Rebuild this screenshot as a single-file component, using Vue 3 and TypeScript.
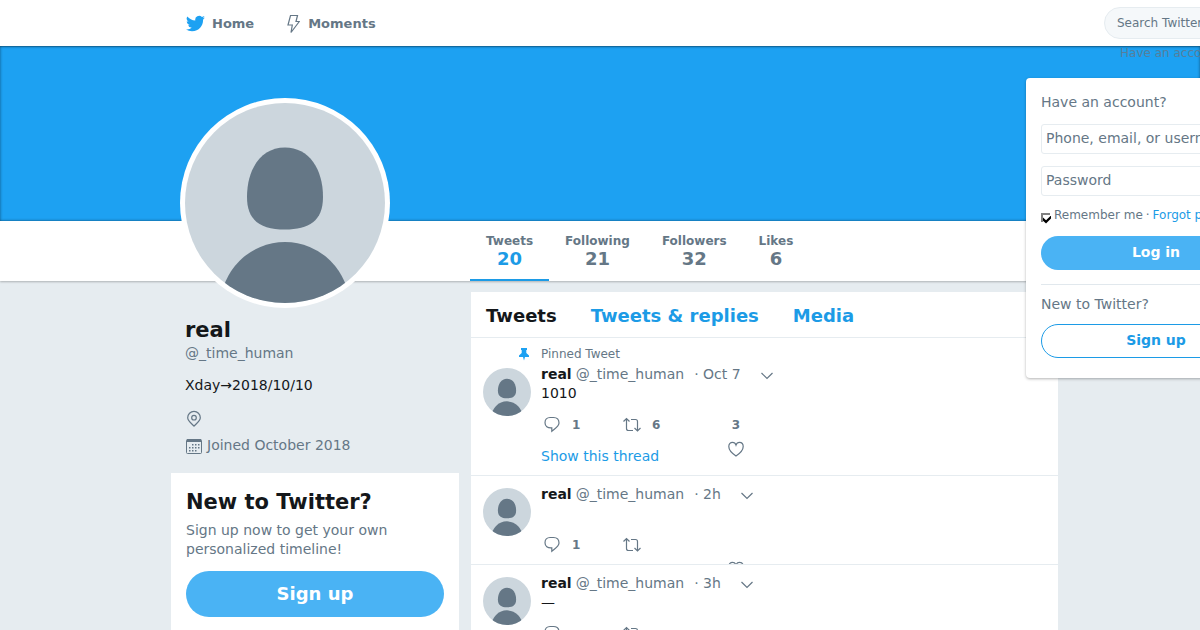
<script setup lang="ts">
import { ref } from 'vue'

interface Tweet {
  id: number
  pinned?: boolean
  time: string
  text: string
  replies?: number
  retweets?: number
  likes?: number
  thread?: boolean
}

const stats = [
  { label: 'Tweets', value: 20 },
  { label: 'Following', value: 21 },
  { label: 'Followers', value: 32 },
  { label: 'Likes', value: 6 },
]

const tweets: Tweet[] = [
  { id: 1, pinned: true, time: 'Oct 7', text: '1010', replies: 1, retweets: 6, likes: 3, thread: true },
  { id: 2, time: '2h', text: '', replies: 1 },
  { id: 3, time: '3h', text: '—' },
]

const search = ref('')
const user = ref('')
const password = ref('')
const remember = ref(true)
const dots = [
  [7, 7], [10, 7], [13, 7],
  [4, 10], [7, 10], [10, 10], [13, 10],
  [4, 13], [7, 13], [10, 13],
]
</script>

<template>
  <div class="page">
    <svg class="defs" aria-hidden="true">
      <symbol id="person" viewBox="0 0 200 200">
        <rect width="200" height="200" fill="#ccd6dd" />
        <path fill="#657786" d="M100 44.500C124 44.500 138 66 138 94C138 118 124 126.500 100 126.500C76 126.500 62 118 62 94C62 66 76 44.500 100 44.500Z" />
        <circle cx="100" cy="203.500" r="64.500" fill="#657786" />
      </symbol>
    </svg>

    <header class="topbar">
      <div class="container topbar-inner">
        <nav class="main-nav" aria-label="Main">
          <a href="#">
            <svg class="bird" viewBox="0 0 24 24"><path fill="#1da1f2" d="M23.950 4.570a10 10 0 0 1-2.820.780 4.960 4.960 0 0 0 2.160-2.730c-.950.560-2 .960-3.130 1.190a4.920 4.920 0 0 0-8.380 4.480C7.690 8.100 4.070 6.130 1.640 3.160a4.920 4.920 0 0 0 1.520 6.570 4.900 4.900 0 0 1-2.230-.610v.060c0 2.380 1.700 4.370 3.950 4.820a5 5 0 0 1-2.210.090 4.940 4.940 0 0 0 4.600 3.420A9.870 9.870 0 0 1 0 19.540a14 14 0 0 0 7.550 2.210c9.050 0 14-7.500 14-13.980 0-.210 0-.420-.020-.630a9.940 9.940 0 0 0 2.420-2.570z" /></svg>
            Home
          </a>
          <a href="#">
            <svg class="bolt" viewBox="0 0 14 20"><path d="M4.500 1.500H11.500L10 7.500H13.300L5 18.500L6.300 11H2Z" /></svg>
            Moments
          </a>
        </nav>
        <form class="search" role="search" @submit.prevent>
          <input v-model="search" type="search" placeholder="Search Twitter" aria-label="Search Twitter" />
        </form>
        <section class="account">
          <button class="account-toggle" type="button">Have an account?</button>
          <form class="login" @submit.prevent>
            <p class="login-title">Have an account?</p>
            <input v-model="user" class="field" type="text" placeholder="Phone, email, or username" aria-label="Phone, email, or username" />
            <input v-model="password" class="field" type="password" placeholder="Password" aria-label="Password" />
            <div class="remember">
              <label><input v-model="remember" type="checkbox" />Remember me</label>
              <span>·</span>
              <a href="#">Forgot password?</a>
            </div>
            <button class="pill filled" type="submit">Log in</button>
            <hr />
            <p class="login-new">New to Twitter?</p>
            <button class="pill outline" type="button">Sign up</button>
          </form>
        </section>
      </div>
    </header>

    <div class="banner"></div>

    <div class="stats-bar">
      <nav class="container stats" aria-label="Profile">
        <a v-for="(s, i) in stats" :key="s.label" href="#" :class="{ active: i === 0 }">
          <span class="stat-label">{{ s.label }}</span>
          <span class="stat-value">{{ s.value }}</span>
        </a>
      </nav>
    </div>

    <main class="container columns">
      <aside class="sidebar">
        <div class="photo"><svg role="img" aria-label="real"><use href="#person" /></svg></div>
        <section class="profile">
          <h1>real</h1>
          <a class="handle" href="#">@_time_human</a>
          <p class="bio">Xday→2018/10/10</p>
          <p class="fact">
            <svg class="line" viewBox="0 0 18 20"><path d="M9 17.200C6 14 2.700 11.800 2.700 8.700A6.300 6.300 0 0 1 15.300 8.700C15.300 11.800 12 14 9 17.200Z" /><circle cx="9" cy="8.700" r="2.300" /></svg>
          </p>
          <p class="fact joined">
            <svg viewBox="0 0 18 20">
              <rect x="1.500" y="4.500" width="15" height="14" rx="1" fill="none" stroke="#657786" />
              <path d="M2 4h14v3H2z" fill="#657786" />
              <rect v-for="d in dots" :key="d.join()" :x="d[0]" :y="d[1] + 2" width="1.500" height="1.500" fill="#657786" />
            </svg>
            Joined October 2018
          </p>
        </section>
        <section class="join">
          <h2>New to Twitter?</h2>
          <p>Sign up now to get your own personalized timeline!</p>
          <button class="pill large" type="button">Sign up</button>
        </section>
      </aside>

      <section class="feed">
        <nav class="tabs" aria-label="Timeline">
          <a class="current" href="#">Tweets</a>
          <a href="#">Tweets &amp; replies</a>
          <a href="#">Media</a>
        </nav>
        <article v-for="t in tweets" :key="t.id" class="tweet">
          <p v-if="t.pinned" class="pinned">
            <svg viewBox="0 0 12 14"><path fill="#1da1f2" d="M3 1H9V3H8.300V6L11 8.500V10H7L6 13.500L5 10H1V8.500L3.700 6V3H3Z" /></svg>
            Pinned Tweet
          </p>
          <div class="tweet-main">
            <svg class="thumb" aria-hidden="true"><use href="#person" /></svg>
            <div class="tweet-content">
              <div class="byline">
                <strong>real</strong>
                <a href="#">@_time_human</a>
                <span class="time">· {{ t.time }}</span>
                <button type="button" aria-label="More">
                  <svg class="line" viewBox="0 0 14 14"><path d="M1.500 4L7 9.500L12.500 4" /></svg>
                </button>
              </div>
              <p class="text">{{ t.text }}</p>
              <div class="actions">
                <button type="button" aria-label="Reply">
                  <svg class="line" viewBox="0 0 20 20"><path d="M8 2.500H11.500C15 2.500 17 4.800 17 8C17 11.500 13 13.500 9.800 16.200V12.900C5.500 13.200 3 11.200 3 7.700C3 4.700 5 2.500 8 2.500Z" /></svg>
                  {{ t.replies }}
                </button>
                <button type="button" aria-label="Retweet">
                  <svg class="line" viewBox="0 0 20 20"><path d="M1.500 6.500L4.500 3.500L7.500 6.500M4.500 3.500V13.500Q4.500 15.500 6.500 15.500H11M9 4.500H13.500Q15.500 4.500 15.500 6.500V16M12.500 13L15.500 16L18.500 13" /></svg>
                  {{ t.retweets }}
                </button>
                <button class="like" type="button" aria-label="Like">
                  <span>{{ t.likes }}</span>
                  <svg class="line" viewBox="0 0 20 20"><path d="M10 17C7 15 2.800 11.500 2.800 7.500C2.800 5 4.500 3.300 6.500 3.300C8.300 3.300 9.500 4.500 10 6C10.500 4.500 11.700 3.300 13.500 3.300C15.500 3.300 17.200 5 17.200 7.500C17.200 11.500 13 15 10 17Z" /></svg>
                </button>
              </div>
              <a v-if="t.thread" class="thread" href="#">Show this thread</a>
            </div>
          </div>
        </article>
      </section>
    </main>
  </div>
</template>

<style>
body {
  margin: 0;
}
</style>

<style scoped>
.page {
  height: 100vh;
  overflow: hidden;
  background: #e6ecf0;
  color: #14171a;
  font: 14px/20px "DejaVu Sans", sans-serif;
}
.defs {
  position: absolute;
  width: 0;
  height: 0;
}
h1, h2, p {
  margin: 0;
}
a {
  color: #1c9be6;
  text-decoration: none;
}
button, input {
  font: inherit;
  box-sizing: border-box;
}
button {
  border: 0;
  padding: 0;
  background: none;
  color: inherit;
  cursor: pointer;
}
.line {
  fill: none;
  stroke: #657786;
  stroke-width: 1.2;
}
.container {
  width: 858px;
  margin: 0 auto;
}

.topbar {
  position: relative;
  z-index: 3;
  background: #fff;
  box-shadow: 0 0 2px rgba(0, 0, 0, 0.6);
}
.topbar-inner {
  position: relative;
  display: grid;
  grid-template-columns: 933px 220px;
  align-items: center;
  height: 46px;
}
.main-nav {
  display: flex;
  gap: 32px;
  padding: 1px 0 0 15px;
}
.main-nav a {
  display: flex;
  align-items: center;
  color: #657786;
  font-size: 13px;
  font-weight: bold;
}
.bird {
  width: 19px;
  height: 19px;
  margin-right: 7px;
}
.bolt {
  width: 14px;
  height: 20px;
  margin-right: 8px;
  fill: none;
  stroke: #657786;
  stroke-width: 1.2;
}
.search input {
  display: block;
  width: 100%;
  height: 32px;
  padding: 0 12px;
  border: 1px solid #e6ecf0;
  border-radius: 16px;
  background: #f5f8fa;
  font-size: 12px;
}
input::placeholder {
  color: #657786;
  opacity: 1;
}
.account {
  position: absolute;
  top: 44px;
  left: 855px;
  width: 260px;
}
.account-toggle {
  display: block;
  margin-left: 94px;
  color: #657786;
  font-size: 12px;
  line-height: 18px;
  white-space: nowrap;
  opacity: 0.8;
}
.login {
  display: flex;
  flex-direction: column;
  margin-top: 16px;
  padding: 15px 15px 20px;
  border-radius: 4px;
  background: #fff;
  box-shadow: 0 1px 3px rgba(0, 0, 0, 0.3);
  color: #657786;
}
.login-title {
  margin-bottom: 13px;
  line-height: 18px;
}
.field {
  width: 100%;
  height: 30px;
  margin-bottom: 12px;
  padding: 0 4px 2px;
  border: 1px solid #e6ecf0;
  border-radius: 3px;
  background: #fff;
}
.remember {
  display: flex;
  gap: 3px;
  margin: -2px 0 12px;
  font-size: 12px;
  line-height: 18px;
  white-space: nowrap;
}
.remember label {
  display: flex;
  align-items: center;
}
.remember input {
  position: relative;
  appearance: none;
  width: 9px;
  height: 9px;
  margin: 4px 4px 0 0;
  border: solid #808080;
  border-width: 2px 0 0 2px;
  background: #fff;
}
.remember input:checked::after {
  content: "";
  position: absolute;
  top: 1px;
  left: 0;
  width: 8px;
  height: 8px;
  background: #000;
  clip-path: polygon(0 25%, 38% 58%, 100% 0, 100% 38%, 38% 100%, 0 65%);
}
.pill {
  height: 34px;
  padding-bottom: 2px;
  border-radius: 100px;
  background: #4ab3f4;
  color: #fff;
  font-weight: bold;
}
.pill.outline {
  border: 1px solid #1c9be6;
  background: #fff;
  color: #1c9be6;
}
.pill.large {
  width: 100%;
  height: 46px;
  padding-bottom: 0;
  font-size: 18px;
}
.login hr {
  width: 100%;
  height: 1px;
  margin: 14px 0 9px;
  border: 0;
  background: #e1e8ed;
}
.login-new {
  margin-bottom: 10px;
}

.banner {
  height: 175px;
  background: #1da1f2;
  box-shadow: inset 0 0 3px rgba(0, 0, 0, 0.5);
}
.stats-bar {
  position: relative;
  background: #fff;
  box-shadow: 0 1px 2px rgba(0, 0, 0, 0.25);
}
.stats {
  display: flex;
  height: 60px;
}
.stats a {
  display: flex;
  flex-direction: column;
  align-items: center;
  box-sizing: border-box;
  padding: 12px 16px 0;
  color: #657786;
  font-weight: bold;
}
.stats a:first-child {
  margin-left: 299px;
}
.stats a.active {
  border-bottom: 2px solid #1c9be6;
}
.stat-label {
  font-size: 12px;
  line-height: 16px;
}
.stat-value {
  font-size: 18px;
}
.active .stat-value {
  color: #1c9be6;
}

.columns {
  position: relative;
  display: grid;
  grid-template-columns: 288px 587px;
  gap: 12px;
  align-items: start;
}
.sidebar {
  position: relative;
}
.photo {
  position: absolute;
  top: -183px;
  left: 9px;
  padding: 5px;
  border-radius: 50%;
  background: #fff;
}
.photo svg {
  display: block;
  width: 200px;
  height: 200px;
  border-radius: 50%;
}
.profile {
  padding: 37px 14px 18px;
  color: #657786;
}
h1 {
  color: #14171a;
  font-size: 21px;
  line-height: 25px;
}
.handle {
  display: block;
  color: #657786;
  line-height: 20px;
}
.bio {
  margin: 12px 0 14px;
  color: #14171a;
}
.fact {
  display: flex;
  align-items: center;
  gap: 4px;
  height: 20px;
}
.fact svg {
  width: 18px;
  height: 20px;
}
.joined {
  margin-top: 6px;
}
.join {
  padding: 16px 15px;
  background: #fff;
}
h2 {
  font-size: 21px;
  line-height: 27px;
}
.join p {
  margin: 5px 0 12px;
  color: #657786;
  line-height: 19px;
}

.feed {
  margin-top: 11px;
  background: #fff;
}
.tabs {
  display: flex;
  gap: 34px;
  padding: 14px 15px 11px;
  border-bottom: 1px solid #e6ecf0;
  font-size: 18px;
  font-weight: bold;
}
.tabs .current {
  color: #14171a;
}
.tweet {
  padding: 8px 12px 9px;
  border-bottom: 1px solid #e6ecf0;
  overflow: hidden;
}
.pinned {
  display: flex;
  align-items: center;
  gap: 11px;
  margin: 0 0 2px 35px;
  color: #657786;
  font-size: 12px;
  line-height: 16px;
}
.pinned svg {
  width: 12px;
  height: 14px;
}
.tweet-main {
  display: flex;
  gap: 10px;
}
.thumb {
  flex: none;
  width: 48px;
  height: 48px;
  margin-top: 4px;
  border-radius: 50%;
}
.byline {
  display: flex;
  align-items: center;
  height: 20px;
  color: #657786;
}
.byline strong {
  margin-right: 4px;
  color: #14171a;
}
.byline a {
  color: inherit;
}
.time {
  margin: 0 19px 0 10px;
}
.byline svg {
  display: block;
  width: 14px;
  height: 14px;
  margin-top: 3px;
}
.text {
  min-height: 19px;
  line-height: 19px;
}
.actions {
  display: grid;
  grid-template-columns: 80px 104px 20px;
  align-items: start;
  height: 20px;
  margin-top: 12px;
  padding-left: 1px;
  color: #657786;
  font-size: 12px;
  font-weight: bold;
}
.actions button {
  display: flex;
  align-items: center;
  gap: 10px;
}
.actions svg {
  flex: none;
  width: 20px;
  height: 20px;
}
.actions .like {
  flex-direction: column;
  gap: 4px;
}
.like span {
  height: 20px;
}
.thread {
  display: block;
  margin-top: 11px;
}
</style>
